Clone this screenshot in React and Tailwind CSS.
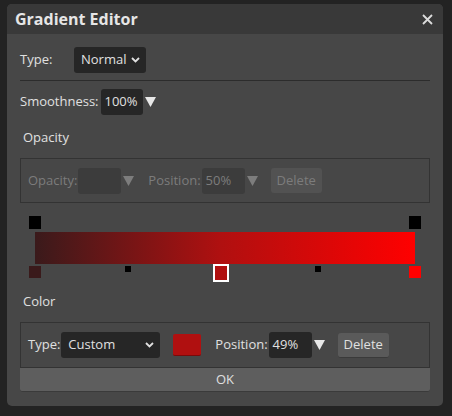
import React from 'react';

const font = { fontFamily: '"Open Sans", "Liberation Sans", sans-serif' };

// small white down-pointing triangle used next to numeric inputs
function Arrow({ dim }) {
  return (
    <svg width="11" height="10" viewBox="0 0 11 10" className="ml-[2px] shrink-0">
      <polygon points="0,0 11,0 5.5,10" fill={dim ? '#7d7d7d' : '#e8e8e8'} />
    </svg>
  );
}

function Chevron() {
  return (
    <svg width="9" height="6" viewBox="0 0 9 6">
      <polyline points="1,1 4.5,4.5 8,1" fill="none" stroke="#e0e0e0" strokeWidth="1.8" />
    </svg>
  );
}

export default function App() {
  return (
    <div className="w-[452px] h-[416px] bg-[#232323] pt-[4px] pl-[7px] text-[13px]" style={font}>
      <div className="w-[436px] h-[402px] rounded-[5px] bg-[#474747] flex flex-col overflow-hidden">
        {/* title bar */}
        <div className="h-[30px] bg-[#393939] flex items-center justify-between pl-[8px] pr-[10px]">
          <span className="text-[16px] font-bold text-[#e6e6e6]">Gradient Editor</span>
          <svg width="11" height="11" viewBox="0 0 11 11">
            <path d="M1 1 L10 10 M10 1 L1 10" stroke="#dcdcdc" strokeWidth="1.8" />
          </svg>
        </div>

        <div className="flex flex-col px-[13px] text-[#e0e0e0]">
          {/* type */}
          <div className="flex items-center mt-[13px] h-[26px]">
            <span className="w-[54px]">Type:</span>
            <div className="h-[26px] w-[72px] bg-[#262626] rounded-[3px] flex items-center justify-between pl-[7px] pr-[6px]">
              <span>Normal</span>
              <Chevron />
            </div>
          </div>

          <div className="mt-[7px] h-px bg-[#2c2c2c]" />

          {/* smoothness */}
          <div className="flex items-center mt-[8px] h-[26px]">
            <span className="mr-[2px]">Smoothness:</span>
            <div className="h-[26px] w-[42px] bg-[#262626] rounded-[3px] flex items-center pl-[4px]">100%</div>
            <Arrow />
          </div>

          <div className="mt-[13px] ml-[3px] leading-[18px]">Opacity</div>

          {/* opacity stop settings (disabled) */}
          <div className="mt-[12px] h-[45px] border border-[#333333] flex items-center px-[7px] text-[#7c7c7c]">
            <span>Opacity:</span>
            <div className="h-[26px] w-[43px] bg-[#3c3c3c] rounded-[3px] ml-[1px]" />
            <Arrow dim />
            <span className="ml-[14px]">Position:</span>
            <div className="h-[26px] w-[43px] bg-[#3c3c3c] rounded-[3px] ml-[1px] flex items-center pl-[4px]">50%</div>
            <Arrow dim />
            <div className="ml-[13px] h-[25px] px-[6px] rounded-[3px] bg-[#525252] flex items-center">Delete</div>
          </div>

          {/* gradient preview with stops */}
          <div className="relative mt-[13px] ml-[9px] w-[392px] h-[66px]">
            <div className="absolute left-0 top-0 w-[12px] h-[13px] bg-black" />
            <div className="absolute left-[380px] top-0 w-[12px] h-[13px] bg-black" />
            <div
              className="absolute left-[6px] top-[16px] w-[380px] h-[32px]"
              style={{ background: 'linear-gradient(to right, #3a1a1b 0%, #b01010 49%, #ff0000 100%)' }}
            />
            <div className="absolute left-0 top-[50px] w-[12px] h-[12px] bg-[#3a1a1b]" />
            <div className="absolute left-[96px] top-[50px] w-[6px] h-[6px] bg-black" />
            <div className="absolute left-[184px] top-[48px] w-[16px] h-[18px] border-2 border-white bg-[#b01010]" />
            <div className="absolute left-[286px] top-[50px] w-[6px] h-[6px] bg-black" />
            <div className="absolute left-[380px] top-[50px] w-[12px] h-[12px] bg-[#ff0000]" />
          </div>

          <div className="mt-[10px] ml-[3px] leading-[18px]">Color</div>

          {/* color stop settings */}
          <div className="mt-[12px] h-[46px] border border-[#333333] flex items-center px-[7px]">
            <span>Type:</span>
            <div className="ml-[1px] h-[26px] w-[99px] bg-[#262626] rounded-[3px] flex items-center justify-between pl-[7px] pr-[6px]">
              <span>Custom</span>
              <Chevron />
            </div>
            <div className="ml-[13px] h-[22px] w-[28px] rounded-[2px] bg-[#b01010] border-b border-[#7a0a0a]" />
            <span className="ml-[14px]">Position:</span>
            <div className="ml-[1px] h-[26px] w-[43px] bg-[#262626] rounded-[3px] flex items-center pl-[4px]">49%</div>
            <Arrow />
            <div className="ml-[13px] h-[25px] px-[6px] rounded-[3px] bg-[#5a5a5a] border-b border-[#3a3a3a] flex items-center">Delete</div>
          </div>

          <div className="h-[24px] bg-[#5e5e5e] rounded-b-[3px] border-b border-[#3a3a3a] flex items-center justify-center">OK</div>
        </div>
      </div>
    </div>
  );
}
